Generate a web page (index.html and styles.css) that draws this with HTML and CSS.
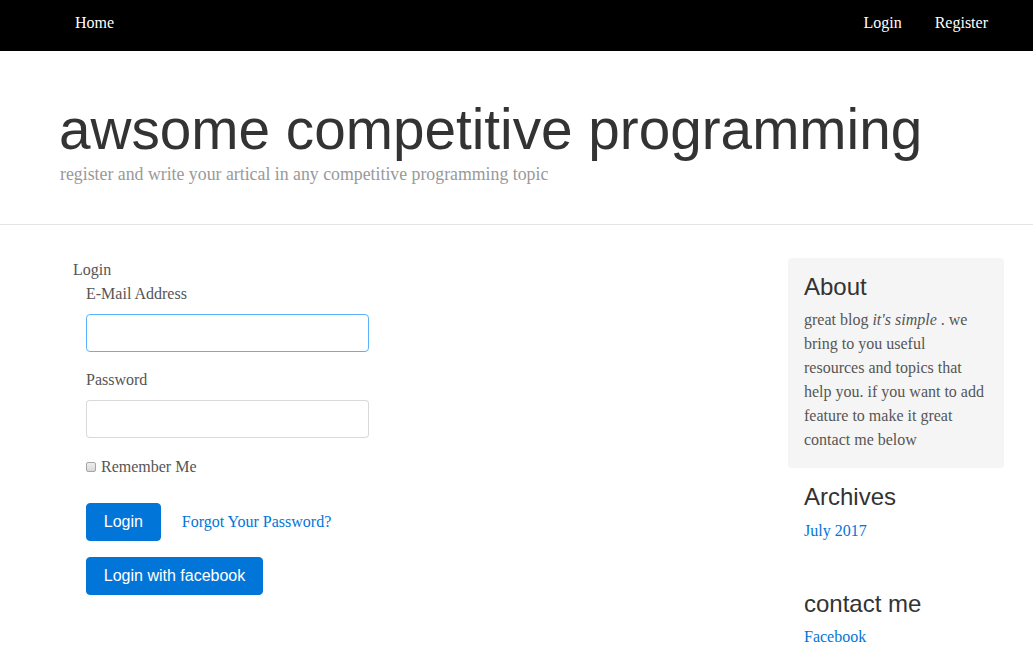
FILE: index.html
```html
<!DOCTYPE html>
<html>
<head>
<meta charset="utf-8">
<link rel="stylesheet" href="styles.css">
</head>
<body>
<nav class="topnav">
  <a class="nav-link" href="#">Home</a>
  <div class="nav-right">
    <a class="nav-link" href="#">Login</a>
    <a class="nav-link" href="#">Register</a>
  </div>
</nav>
<header class="blog-header">
  <h1 class="blog-title">awsome competitive programming</h1>
  <p class="blog-desc">register and write your artical in any competitive programming topic</p>
</header>
<div class="page">
  <main class="main">
    <div class="panel-title">Login</div>
    <form class="form">
      <label class="label">E-Mail Address</label>
      <input class="input input-focus" type="email">
      <label class="label">Password</label>
      <input class="input" type="password">
      <label class="check"><input type="checkbox" class="checkbox"> Remember Me</label>
      <div class="actions">
        <button class="btn" type="button">Login</button>
        <a class="link" href="#">Forgot Your Password?</a>
      </div>
      <button class="btn" type="button">Login with facebook</button>
    </form>
  </main>
  <aside class="sidebar">
    <div class="about">
      <h4 class="side-title about-title">About</h4>
      <p class="side-text">great blog <em>it's simple</em> . we bring to you useful resources and topics that help you. if you want to add feature to make it great contact me below</p>
    </div>
    <div class="side-module">
      <h4 class="side-title">Archives</h4>
      <a class="link" href="#">July 2017</a>
    </div>
    <div class="side-module contact">
      <h4 class="side-title">contact me</h4>
      <a class="link" href="#">Facebook</a>
    </div>
  </aside>
</div>
</body>
</html>
```
FILE: styles.css
```css
* { box-sizing: border-box; }
body {
  margin: 0;
  font-family: "Liberation Serif", "Times New Roman", serif;
  font-size: 16px;
  line-height: 1.5;
  color: #555;
  background: #fff;
}
.topnav {
  background: #000;
  height: 51px;
  display: flex;
  align-items: center;
  justify-content: space-between;
  padding: 0 45px 6px 75px;
}
.nav-right { display: flex; gap: 33px; }
.nav-link {
  color: #fff;
  text-decoration: none;
  font-size: 16px;
}
.blog-header {
  padding: 48px 0 0 59px;
  height: 174px;
  border-bottom: 1px solid #e5e5e5;
}
.blog-title {
  margin: 0;
  font-family: "Liberation Sans", Arial, sans-serif;
  font-weight: 400;
  font-size: 56.7px;
  line-height: 1.1;
  color: #333;
}
.blog-desc {
  margin: 3px 0 0;
  font-size: 17.8px;
  color: #999;
  line-height: 1.2;
  padding-left: 1px;
}
.page {
  display: flex;
  justify-content: space-between;
  padding: 33px 29px 0 73px;
}
.main { width: 300px; }
.panel-title { line-height: 24px; }
.form {
  display: flex;
  flex-direction: column;
  align-items: flex-start;
  padding-left: 13px;
}
.label { line-height: 24px; margin-bottom: 8px; }
.input {
  width: 283px;
  height: 38px;
  border: 1px solid rgba(0,0,0,0.15);
  border-radius: 4px;
  margin-bottom: 16px;
  font-size: 16px;
  padding: 8px 12px;
  outline: none;
}
.input-focus { border-color: #5cb3fd; }
.check {
  display: flex;
  align-items: center;
  line-height: 24px;
  margin-top: 1px;
  margin-bottom: 24px;
}
.checkbox {
  appearance: none;
  -webkit-appearance: none;
  margin: 0 5px 0 0;
  width: 10px;
  height: 10px;
  border: 1px solid #a5a5a5;
  border-radius: 2px;
  background: linear-gradient(#eee, #d8d8d8);
}
.actions {
  display: flex;
  align-items: center;
  gap: 21px;
  margin-bottom: 16px;
}
.btn {
  background: #0275d8;
  color: #fff;
  border: 1px solid #0275d8;
  border-radius: 4px;
  height: 38px;
  padding: 0 16.8px;
  font-family: "Liberation Sans", Arial, sans-serif;
  font-size: 16px;
}
.link { color: #0275d8; text-decoration: none; }
.sidebar { width: 216px; padding-top: 0; }
.about {
  background: #f5f5f5;
  border-radius: 4px;
  padding: 15px 16px 16px;
}
.side-title {
  margin: 0 0 7px;
  font-family: "Liberation Sans", Arial, sans-serif;
  font-weight: 400;
  font-size: 24px;
  line-height: 1.2;
  color: #333;
}
.about-title { margin-bottom: 6px; }
.side-text { margin: 0; }
.side-module { padding: 15px 16px 0; }
.contact { padding-top: 47px; }
```
